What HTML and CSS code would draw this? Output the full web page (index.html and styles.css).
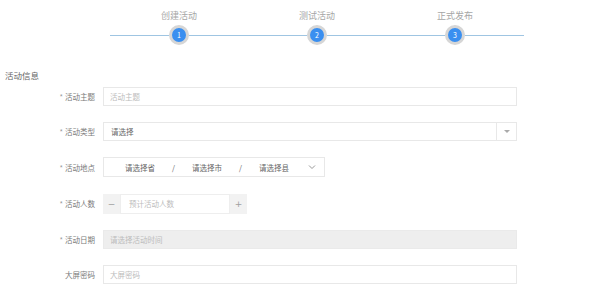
FILE: index.html
```html
<!DOCTYPE html>
<html lang="zh-CN">
<head>
    <meta charset="UTF-8">
    <title>创建活动</title>
    <link rel="stylesheet" href="styles.css">
</head>
<body>
    <div class="steps">
        <div class="step">
            <div class="step-title">创建活动</div>
            <div class="step-track"><span class="seg"></span><span class="dot">1</span><span class="seg"></span></div>
        </div>
        <div class="step">
            <div class="step-title">测试活动</div>
            <div class="step-track"><span class="seg"></span><span class="dot">2</span><span class="seg"></span></div>
        </div>
        <div class="step">
            <div class="step-title">正式发布</div>
            <div class="step-track"><span class="seg"></span><span class="dot">3</span><span class="seg"></span></div>
        </div>
    </div>

    <div class="section-title">活动信息</div>

    <div class="form">
        <div class="form-row">
            <label class="form-label"><i>*</i>活动主题</label>
            <div class="field wide"><span class="placeholder">活动主题</span></div>
        </div>

        <div class="form-row">
            <label class="form-label"><i>*</i>活动类型</label>
            <div class="field wide select">
                <span class="value">请选择</span>
                <span class="select-btn"><span class="caret"></span></span>
            </div>
        </div>

        <div class="form-row">
            <label class="form-label"><i>*</i>活动地点</label>
            <div class="field area">
                <span class="value">请选择省</span>
                <span class="slash">/</span>
                <span class="value">请选择市</span>
                <span class="slash">/</span>
                <span class="value">请选择县</span>
                <svg class="chevron" width="8" height="6" viewBox="0 0 8 6"><path d="M1 1.5 L4 4.5 L7 1.5" fill="none" stroke="#999" stroke-width="1"/></svg>
            </div>
        </div>

        <div class="form-row">
            <label class="form-label"><i>*</i>活动人数</label>
            <div class="number">
                <span class="num-btn">&minus;</span>
                <span class="num-input"><span class="placeholder">预计活动人数</span></span>
                <span class="num-btn">+</span>
            </div>
        </div>

        <div class="form-row">
            <label class="form-label"><i>*</i>活动日期</label>
            <div class="field wide disabled"><span class="placeholder">请选择活动时间</span></div>
        </div>

        <div class="form-row">
            <label class="form-label">大屏密码</label>
            <div class="field wide"><span class="placeholder">大屏密码</span></div>
        </div>
    </div>
</body>
</html>
```

FILE: styles.css
```css
body {
    margin: 0;
    background-color: #ffffff;
    font-family: "Noto Sans CJK SC", "Noto Sans", sans-serif;
    color: #777777;
}

/* steps */
.steps {
    display: flex;
    width: 414px;
    margin-left: 110px;
    padding-top: 9px;
}
.step {
    flex: 1;
    display: flex;
    flex-direction: column;
    align-items: center;
}
.step-title {
    font-size: 9px;
    line-height: 13px;
    color: #a6a6a6;
}
.step-track {
    display: flex;
    align-items: center;
    width: 100%;
    height: 20px;
    margin-top: 3px;
}
.seg {
    flex: 1;
    height: 1px;
    background-color: #9fc5e2;
}
.dot {
    width: 14px;
    height: 14px;
    border: 3px solid #d6d6d6;
    border-radius: 50%;
    background-color: #3a8ff0;
    color: #ffffff;
    font-size: 7px;
    line-height: 14px;
    text-align: center;
}

.section-title {
    margin: 24px 0 0 5px;
    font-size: 8.5px;
    line-height: 12px;
    color: #666666;
}

/* form */
.form {
    margin-top: 6px;
}
.form-row {
    display: flex;
    align-items: center;
    margin-bottom: 16.2px;
    font-size: 7.5px;
}
.form-label {
    width: 103px;
    padding-right: 8px;
    box-sizing: border-box;
    text-align: right;
    color: #7a7a7a;
}
.form-label i {
    font-style: normal;
    color: #999999;
    margin-right: 2px;
}
.field {
    display: flex;
    align-items: center;
    height: 19px;
    box-sizing: border-box;
    border: 1px solid #e8e8e8;
    padding-left: 6px;
}
.wide {
    width: 414px;
}
.placeholder {
    color: #bcbcbc;
}
.value {
    color: #666666;
}
.select {
    justify-content: space-between;
    padding-left: 7px;
}
.select-btn {
    display: flex;
    align-items: center;
    justify-content: center;
    width: 19px;
    height: 100%;
    border-left: 1px solid #e8e8e8;
}
.caret {
    width: 0;
    height: 0;
    border-left: 3px solid transparent;
    border-right: 3px solid transparent;
    border-top: 3px solid #aaaaaa;
}
.disabled {
    background-color: #eeeeee;
    border-color: #eaeaea;
}

.area {
    width: 222px;
    height: 20px;
    padding-left: 21px;
    gap: 17px;
}
.slash {
    color: #666666;
}
.chevron {
    margin-left: 2px;
}

.number {
    display: flex;
    height: 20px;
    width: 144px;
    background-color: #f2f2f2;
}
.num-btn {
    width: 17px;
    display: flex;
    align-items: center;
    justify-content: center;
    color: #a0a0a0;
    font-size: 9px;
    font-family: "DejaVu Sans", sans-serif;
}
.num-input {
    flex: 1;
    display: flex;
    align-items: center;
    padding-left: 8px;
    background-color: #ffffff;
    border: 1px solid #eeeeee;
}
```
